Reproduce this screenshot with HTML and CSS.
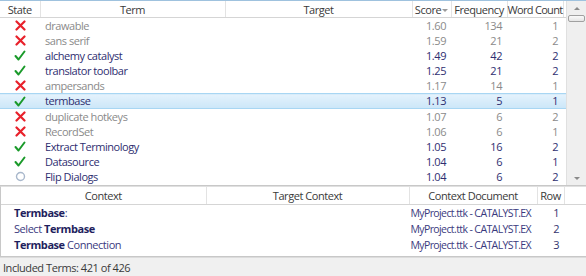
FILE: index.html
```html
<!DOCTYPE html>
<html lang="en">
<head>
  <meta charset="UTF-8">
  <title>Term Extraction</title>
  <link rel="stylesheet" href="styles.css">
</head>
<body>
  <!-- Terms grid -->
  <div class="terms-pane">
    <div class="grid-wrap">
      <table class="grid terms">
        <colgroup>
          <col style="width:40px"><col style="width:185px"><col style="width:187px">
          <col style="width:39px"><col style="width:56px"><col style="width:56px"><col>
        </colgroup>
        <thead>
          <tr>
            <th>State</th>
            <th>Term</th>
            <th>Target</th>
            <th class="sorted">Score<span class="sort-arrow"></span></th>
            <th>Frequency</th>
            <th class="tight">Word Count</th>
            <th class="filler"></th>
          </tr>
        </thead>
        <tbody id="termRows"></tbody>
      </table>
    </div>
    <div class="scrollbar">
      <div class="arrow up"></div>
      <div class="thumb"></div>
      <div class="track"></div>
      <div class="arrow down"></div>
    </div>
  </div>

  <!-- Context grid -->
  <div class="context-pane">
    <table class="grid context">
      <colgroup>
        <col style="width:205px"><col style="width:203px"><col style="width:128px">
        <col style="width:27px"><col>
      </colgroup>
      <thead>
        <tr>
          <th>Context</th>
          <th>Target Context</th>
          <th>Context Document</th>
          <th>Row</th>
          <th class="filler"></th>
        </tr>
      </thead>
      <tbody>
        <tr>
          <td class="ctx"><b>Termbase</b>:</td>
          <td></td>
          <td class="doc">MyProject.ttk - CATALYST.EX</td>
          <td class="num">1</td>
          <td></td>
        </tr>
        <tr>
          <td class="ctx">Select <b>Termbase</b></td>
          <td></td>
          <td class="doc">MyProject.ttk - CATALYST.EX</td>
          <td class="num">2</td>
          <td></td>
        </tr>
        <tr>
          <td class="ctx"><b>Termbase</b> Connection</td>
          <td></td>
          <td class="doc">MyProject.ttk - CATALYST.EX</td>
          <td class="num">3</td>
          <td></td>
        </tr>
      </tbody>
    </table>
  </div>

  <div class="status-bar">Included Terms: 421 of 426</div>

  <script>
    const terms = [
      { state: "no", term: "drawable", score: "1.60", freq: 134, words: 1 },
      { state: "no", term: "sans serif", score: "1.59", freq: 21, words: 2 },
      { state: "yes", term: "alchemy catalyst", score: "1.49", freq: 42, words: 2 },
      { state: "yes", term: "translator toolbar", score: "1.25", freq: 21, words: 2 },
      { state: "no", term: "ampersands", score: "1.17", freq: 14, words: 1 },
      { state: "yes", term: "termbase", score: "1.13", freq: 5, words: 1, selected: true },
      { state: "no", term: "duplicate hotkeys", score: "1.07", freq: 6, words: 2 },
      { state: "no", term: "RecordSet", score: "1.06", freq: 6, words: 1 },
      { state: "yes", term: "Extract Terminology", score: "1.05", freq: 16, words: 2 },
      { state: "yes", term: "Datasource", score: "1.04", freq: 6, words: 1 },
      { state: "new", term: "Flip Dialogs", score: "1.04", freq: 6, words: 2 }
    ];

    const icons = {
      no: '<svg width="11" height="11" viewBox="0 0 11 11"><path d="M1.5 1.5 L9.5 9.5 M9.5 1.5 L1.5 9.5" stroke="#e8202a" stroke-width="2.2" stroke-linecap="round"/></svg>',
      yes: '<svg width="12" height="11" viewBox="0 0 12 11"><path d="M1.5 6 L4.5 9.5 L10.5 1.5" fill="none" stroke="#1a9a2a" stroke-width="2" stroke-linecap="round" stroke-linejoin="round"/></svg>',
      new: '<svg width="11" height="11" viewBox="0 0 11 11"><circle cx="5.5" cy="5.5" r="4" fill="#fff" stroke="#a9b8cc" stroke-width="1.4"/></svg>'
    };

    const body = document.getElementById("termRows");
    terms.forEach(t => {
      const row = body.insertRow();
      row.className = (t.state === "no" ? "excluded" : "included") + (t.selected ? " selected" : "");
      row.innerHTML = `
        <td class="state">${icons[t.state]}</td>
        <td>${t.term}</td>
        <td></td>
        <td class="num">${t.score}</td>
        <td class="num">${t.freq}</td>
        <td class="num">${t.words}</td>
        <td></td>
      `;
    });
  </script>
</body>
</html>
```

FILE: styles.css
```css
body {
  margin: 0;
  width: 586px;
  height: 276px;
  overflow: hidden;
  font-family: "Open Sans", "Noto Sans", sans-serif;
  font-size: 11px;
  letter-spacing: -0.45px;
  color: #33336e;
  background-color: #fff;
}

/* Grids */
.grid {
  width: 100%;
  border-collapse: collapse;
  table-layout: fixed;
}

.grid th {
  height: 16px;
  padding: 0;
  font-weight: normal;
  color: #3a3a3a;
  text-align: center;
  white-space: nowrap;
  border-right: 1px solid #e3e3e3;
  border-bottom: 1px solid #d5d5d5;
  background-color: #fff;
}

.grid th.tight {
  letter-spacing: -0.7px;
}

.grid th.filler {
  border-right: none;
}

.grid td {
  padding: 0 5px;
  white-space: nowrap;
}

.grid td.num {
  text-align: right;
}

/* Terms pane */
.terms-pane {
  display: flex;
  height: 186px;
  border-top: 1px solid #9fc2de;
  border-bottom: 1px solid #c8c8c8;
  box-sizing: border-box;
}

.grid-wrap {
  flex: 1;
}

.terms td {
  height: 15px;
  line-height: 14px;
}

.terms td.state {
  padding: 0;
  text-align: center;
}

.terms td.state svg {
  display: block;
  margin: 0 auto;
}

.terms tr.excluded {
  color: #8a8a8a;
}

.terms tr.included {
  color: #2e2e70;
}

.terms tr.selected td {
  background: linear-gradient(#e4f2fc, #cbe6f8);
  border-top: 1px solid #a8d6f3;
  border-bottom: 1px solid #a8d6f3;
  height: 13px;
}

.sort-arrow {
  display: inline-block;
  margin-left: 1px;
  border-left: 3px solid transparent;
  border-right: 3px solid transparent;
  border-top: 3px solid #9a9a9a;
  vertical-align: middle;
}

/* Scrollbar */
.scrollbar {
  width: 19px;
  display: flex;
  flex-direction: column;
  background-color: #efefef;
  border-left: 1px solid #e0e0e0;
}

.arrow {
  height: 14px;
  display: flex;
  align-items: center;
  justify-content: center;
}

.arrow::after {
  content: "";
  border-left: 3px solid transparent;
  border-right: 3px solid transparent;
}

.arrow.up::after {
  border-bottom: 3px solid #8a8a8a;
}

.arrow.down::after {
  border-top: 3px solid #8a8a8a;
}

.thumb {
  height: 5px;
  margin: 0 1px;
  background: linear-gradient(#fafafa, #e5e5e5);
  border: 1px solid #a0a0a0;
  border-radius: 2px;
}

.track {
  flex: 1;
}

/* Context pane */
.context-pane {
  height: 69px;
  border-left: 1px solid #c8c8c8;
  border-bottom: 1px solid #c8c8c8;
  border-top: 1px solid #e0e0e0;
}

.context th {
  height: 17px;
}

.context td {
  height: 16px;
  line-height: 16px;
}

.context td.ctx {
  padding-left: 13px;
  color: #3a3a7e;
}

.context td b {
  color: #1f1f5e;
}

.context td.doc {
  text-align: right;
  padding: 0 6px 0 0;
  font-size: 10.5px;
  letter-spacing: -0.6px;
  color: #3a3a7e;
}

/* Status bar */
.status-bar {
  height: 19px;
  line-height: 19px;
  padding-left: 3px;
  background-color: #f0f0f0;
  color: #3a3a3a;
  border-top: 1px solid #dcdcdc;
}
```
